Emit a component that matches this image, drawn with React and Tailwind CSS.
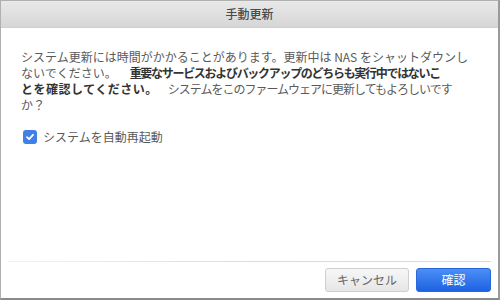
import React, { useState } from 'react';

const App = () => {
    const [autoReboot, setAutoReboot] = useState(true);

    return (
        <div
            className="w-[500px] h-[300px] bg-white flex flex-col border border-[#b0b0b0] border-r-2 border-b-2 border-r-[#9a9a9a] border-b-[#8a8a8a] overflow-hidden"
            style={{ fontFamily: '"Noto Sans CJK JP", "Noto Sans", sans-serif' }}
        >
            {/* Title bar */}
            <div className="h-[27px] shrink-0 flex items-center justify-center bg-gradient-to-b from-[#e9e9e9] to-[#d6d6d6] border-b border-[#d0d0d0]">
                <span className="text-[12px] text-[#4a4a4a] font-medium">手動更新</span>
            </div>

            {/* Body */}
            <div className="flex-1 pl-[20px] pr-[18px] pt-[21px]">
                <p className="text-[12px] leading-[16px] text-[#5a5a5a] whitespace-nowrap">
                    システム更新には時間がかかることがあります。更新中は NAS をシャットダウンし<br />
                    ないでください。
                    <span className="inline-block w-[13px]" />
                    <span className="font-bold text-[#333333] tracking-[-1.3px]">重要なサービスおよびバックアップのどちらも実行中ではないこ</span><br />
                    <span className="font-bold text-[#333333] tracking-[0.5px]">とを確認してください。</span>
                    <span className="inline-block w-[10px]" />
                    <span className="tracking-[-1px]">システムをこのファームウェアに更新してもよろしいです</span><br />
                    か？
                </p>

                <label className="mt-[15px] flex items-center gap-[6px] cursor-pointer">
                    <input
                        type="checkbox"
                        checked={autoReboot}
                        onChange={(e) => setAutoReboot(e.target.checked)}
                        className="sr-only"
                    />
                    <span className={`ml-[2px] w-[14px] h-[14px] rounded-[3px] flex items-center justify-center ${autoReboot ? 'bg-[#3f7fe6]' : 'bg-white border border-[#aaa]'}`}>
                        {autoReboot && (
                            <svg width="10" height="10" viewBox="0 0 10 10">
                                <path d="M2 5.2 L4.1 7.2 L8 2.8" fill="none" stroke="white" strokeWidth="1.8" strokeLinecap="round" strokeLinejoin="round" />
                            </svg>
                        )}
                    </span>
                    <span className="text-[12px] text-[#5a5a5a]">システムを自動再起動</span>
                </label>
            </div>

            {/* Footer */}
            <div className="shrink-0 px-[7px]">
                <div className="h-px bg-gradient-to-r from-[#f2f2f2] via-[#dcdcdc] to-[#d8d8d8]" />
                <div className="flex justify-end gap-[7px] pt-[6px] pb-[6px]">
                    <button className="w-[84px] h-[24px] rounded-[3px] border border-[#cfcfcf] bg-gradient-to-b from-[#f7f7f7] to-[#e6e6e6] text-[12px] text-[#666666]">
                        キャンセル
                    </button>
                    <button className="w-[75px] h-[24px] rounded-[3px] border border-[#2a67d8] bg-gradient-to-b from-[#4b8ef5] to-[#1d62e3] text-[12px] text-white">
                        確認
                    </button>
                </div>
            </div>
        </div>
    );
};

export default App;
